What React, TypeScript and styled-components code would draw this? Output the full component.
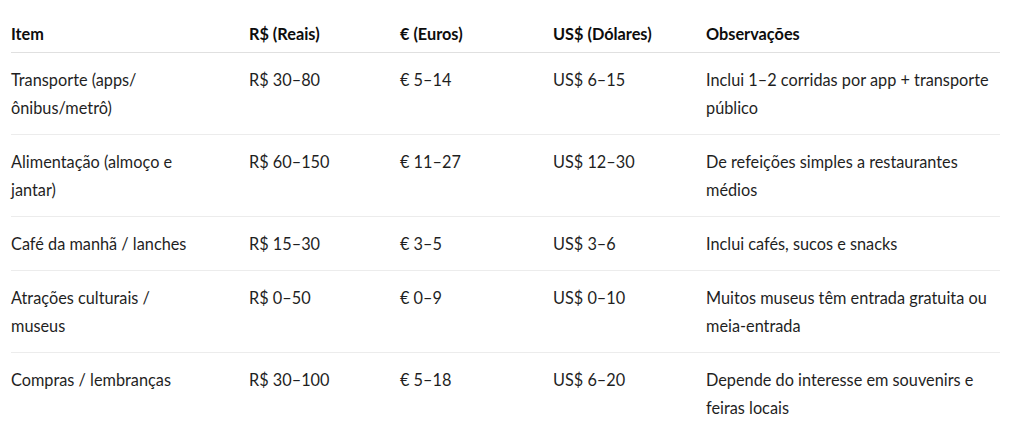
import React from "react";
import styled, { createGlobalStyle } from "styled-components";

type Row = {
  item: string;
  brl: string;
  eur: string;
  usd: string;
  note: string;
};

const rows: Row[] = [
  {
    item: "Transporte (apps/ônibus/metrô)",
    brl: "R$ 30–80",
    eur: "€ 5–14",
    usd: "US$ 6–15",
    note: "Inclui 1–2 corridas por app + transporte público",
  },
  {
    item: "Alimentação (almoço e jantar)",
    brl: "R$ 60–150",
    eur: "€ 11–27",
    usd: "US$ 12–30",
    note: "De refeições simples a restaurantes médios",
  },
  {
    item: "Café da manhã / lanches",
    brl: "R$ 15–30",
    eur: "€ 3–5",
    usd: "US$ 3–6",
    note: "Inclui cafés, sucos e snacks",
  },
  {
    item: "Atrações culturais / museus",
    brl: "R$ 0–50",
    eur: "€ 0–9",
    usd: "US$ 0–10",
    note: "Muitos museus têm entrada gratuita ou meia-entrada",
  },
  {
    item: "Compras / lembranças",
    brl: "R$ 30–100",
    eur: "€ 5–18",
    usd: "US$ 6–20",
    note: "Depende do interesse em souvenirs e feiras locais",
  },
];

const colWidths = [238, 151, 153, 153, 294];

function App() {
  return (
    <Page>
      <GlobalStyle />
      <Table>
        <colgroup>
          {colWidths.map((w, i) => (
            <col key={i} style={{ width: w }} />
          ))}
        </colgroup>
        <thead>
          <tr>
            <Th>Item</Th>
            <Th>R$ (Reais)</Th>
            <Th>€ (Euros)</Th>
            <Th>US$ (Dólares)</Th>
            <Th>Observações</Th>
          </tr>
        </thead>
        <tbody>
          {rows.map((r, i) => (
            <Tr key={i} $last={i === rows.length - 1}>
              <Td $first>{r.item}</Td>
              <Td>{r.brl}</Td>
              <Td>{r.eur}</Td>
              <Td>{r.usd}</Td>
              <Td $lastCol>{r.note}</Td>
            </Tr>
          ))}
        </tbody>
      </Table>
    </Page>
  );
}

const GlobalStyle = createGlobalStyle`
  *, *::before, *::after {
    box-sizing: border-box;
  }
  html, body {
    margin: 0;
    padding: 0;
    background: #ffffff;
  }
  body {
    font-family: Lato, "Noto Sans", "Liberation Sans", sans-serif;
    font-size: 16.3px;
    color: #0d0d0d;
  }
`;

const Page = styled.main`
  padding: 16px 0 0 11px;
  width: 1024px;
  height: 434px;
  overflow: hidden;
`;

const Table = styled.table`
  width: 989px;
  table-layout: fixed;
  border-collapse: collapse;
  border-spacing: 0;
`;

const Th = styled.th`
  text-align: left;
  font-weight: 700;
  line-height: 28px;
  padding: 4px 16px 4px 0;
  border-bottom: 1px solid #e0e0e0;
  color: #0d0d0d;

  &:first-child {
    padding-right: 50px;
  }
`;

const Tr = styled.tr<{ $last?: boolean }>`
  border-bottom: 1px solid ${(p) => (p.$last ? "transparent" : "#ececec")};
`;

const Td = styled.td<{ $first?: boolean; $lastCol?: boolean }>`
  vertical-align: top;
  line-height: 28px;
  padding: 13px ${(p) => (p.$first ? "50px" : p.$lastCol ? "0" : "16px")} 12px 0;
  color: #1f1f1f;
`;

export default App;
